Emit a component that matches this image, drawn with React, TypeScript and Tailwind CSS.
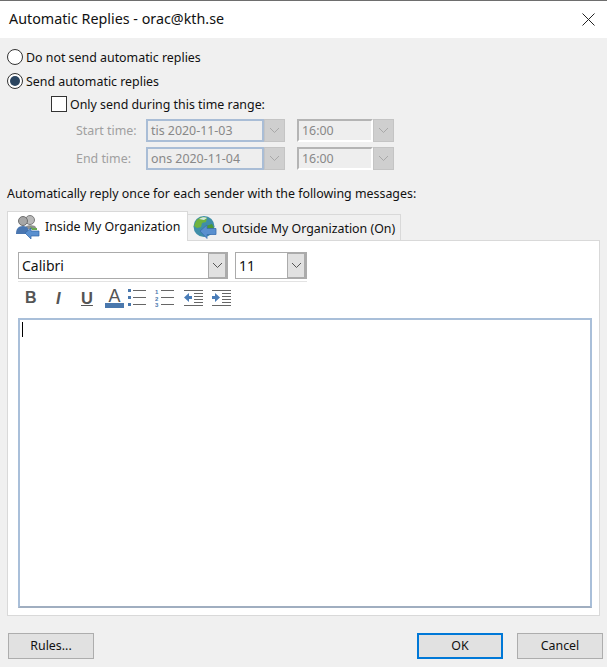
import type { ReactNode } from "react"

const Chevron = ({ color = "#555" }: { color?: string }) => (
  <svg width="11" height="7" viewBox="0 0 11 7" fill="none">
    <path d="M1 1l4.5 4.5L10 1" stroke={color} strokeWidth="1" />
  </svg>
)

function Radio({ checked, label }: { checked?: boolean; label: string }) {
  return (
    <div className="flex items-center h-6">
      <div className="w-[16px] h-[16px] rounded-full border border-[#333] bg-white flex items-center justify-center">
        {checked && <div className="w-[10px] h-[10px] rounded-full bg-[#2b4560]" />}
      </div>
      <span className="ml-[3px] pt-[2px] text-[#111]">{label}</span>
    </div>
  )
}

function DisabledCombo({ text, w, focus }: { text: string; w: string; focus?: boolean }) {
  return (
    <div className={`flex h-[23px] ${w}`}>
      <div
        className={`flex-1 flex items-center pl-[3px] pt-[2px] text-[#888] border-2 ${
          focus ? "border-[#a9bdd6]" : "border-[#b4b4b4] border-r-white border-b-white"
        } bg-[#eeeeee]`}
      >
        {text}
      </div>
      <div className="w-[21px] bg-[#cfcfcf] border border-[#c4c4c4] flex items-center justify-center">
        <Chevron color="#a8a8a8" />
      </div>
    </div>
  )
}

function Combo({ text, w }: { text: string; w: string }) {
  return (
    <div className={`flex h-[27px] ${w} border border-[#ababab] bg-white`}>
      <div className="flex-1 flex items-center pl-[3px] text-[14px] text-[#111]">{text}</div>
      <div className="w-[19px] bg-[#e1e1e1] border-l border-[#ababab] border-r-2 border-r-[#ababab] border-y border-y-[#ababab] flex items-center justify-center">
        <Chevron />
      </div>
    </div>
  )
}

function Btn({ children, primary }: { children: ReactNode; primary?: boolean }) {
  return (
    <button
      className={`w-[86px] h-[26px] bg-[#e1e1e1] text-[#111] ${
        primary ? "border-2 border-[#0078d7]" : "border border-[#adadad]"
      }`}
    >
      {children}
    </button>
  )
}

const PeopleIcon = () => (
  <svg width="26" height="25" viewBox="0 0 26 25">
    <circle cx="15" cy="6" r="4.5" fill="#b9b9b9" stroke="#7c7c7c" />
    <path d="M11 12c2-1 7-1 9 0l2 3h-10z" fill="#8f8f8f" />
    <circle cx="8" cy="7" r="4.5" fill="#a6a6a6" stroke="#6f6f6f" />
    <path d="M1 20c0-5 2-8 7-8s6 3 6 8z" fill="#4a76b0" />
    <path d="M15 12l3 2h4v2h-5z" fill="#6aa84f" />
    <path d="M10 19l6-5v3h8v5h-8v3z" fill="#5a90cf" stroke="#2f66a8" strokeWidth="0.7" />
  </svg>
)

const GlobeIcon = () => (
  <svg width="26" height="25" viewBox="0 0 26 25">
    <circle cx="12" cy="11.5" r="10.5" fill="#3f8ea8" />
    <path d="M4 6c3-4 8-5 11-3l-1 4-4 1-1 4-4 1-3-2z" fill="#6fb33f" />
    <path d="M14 11l6-2 2 4-4 6-4-3z" fill="#4e9a34" />
    <path d="M7 4c3-2 6-2 8-1l-3 2z" fill="#d5e8e0" />
    <path d="M8 16l7-6v3.5h9v6h-9v4z" fill="#5a90cf" stroke="#3a6fb0" strokeWidth="0.8" />
  </svg>
)

function BulletList() {
  return (
    <svg width="18" height="18" viewBox="0 0 18 18">
      <g fill="#4a78ad">
        <rect x="0" y="0" width="3" height="3" />
        <rect x="0" y="7" width="3" height="3" />
        <rect x="0" y="14" width="3" height="3" />
      </g>
      <g fill="#666">
        <rect x="5" y="1" width="13" height="1" />
        <rect x="5" y="8" width="13" height="1" />
        <rect x="5" y="15" width="13" height="1" />
      </g>
    </svg>
  )
}

function NumList() {
  return (
    <svg width="19" height="18" viewBox="0 0 19 18">
      <g fill="#4a78ad" fontSize="6" fontWeight="700" fontFamily="Liberation Sans">
        <text x="0" y="5">1</text>
        <text x="0" y="12">2</text>
        <text x="0" y="18">3</text>
      </g>
      <g fill="#666">
        <rect x="6" y="1" width="13" height="1" />
        <rect x="6" y="8" width="13" height="1" />
        <rect x="6" y="15" width="13" height="1" />
      </g>
    </svg>
  )
}

function Indent({ flip }: { flip?: boolean }) {
  return (
    <svg width="19" height="16" viewBox="0 0 19 16">
      <g fill="#666">
        <rect x="0" y="0" width="19" height="1" />
        <rect x="10" y="3" width="9" height="1" />
        <rect x="10" y="6" width="9" height="1" />
        <rect x="10" y="9" width="9" height="1" />
        <rect x="10" y="12" width="9" height="1" />
        <rect x="0" y="15" width="19" height="1" />
      </g>
      {flip ? (
        <path d="M0 6h3V3l5 4.5-5 4.5V9H0z" fill="#4a7db8" />
      ) : (
        <path d="M8 6H5V3L0 7.5 5 12V9h3z" fill="#4a7db8" />
      )}
    </svg>
  )
}

export default function App() {
  return (
    <div className="w-[607px] h-[667px] overflow-hidden bg-[#f0f0f0] text-[12.4px] font-['Noto_Sans','Open_Sans',sans-serif] leading-none">
      {/* title bar */}
      <div className="h-[38px] bg-white border-t border-[#6e6e6e] flex items-center justify-between pl-[9px] pr-[12px]">
        <span className="text-[14.3px] text-[#111]">Automatic Replies - orac@kth.se</span>
        <svg width="13" height="13" viewBox="0 0 13 13" stroke="#222" strokeWidth="1">
          <path d="M.5.5l12 12M12.5.5l-12 12" />
        </svg>
      </div>

      <div className="pt-[7px] pl-[7px]">
        <Radio label="Do not send automatic replies" />
        <Radio checked label="Send automatic replies" />
        <div className="flex items-center h-[22px] pl-[44px]">
          <div className="w-[16px] h-[16px] border border-[#333] bg-white" />
          <span className="ml-[3px] pt-[2px] text-[#111]">Only send during this time range:</span>
        </div>

        <div className="mt-[4px] flex flex-col gap-[5px] pl-[69px]">
          <div className="flex items-center">
            <span className="w-[70px] pt-[2px] text-[#a0a0a0]">Start time:</span>
            <DisabledCombo focus text="tis 2020-11-03" w="w-[139px]" />
            <div className="w-[12px]" />
            <DisabledCombo text="16:00" w="w-[97px]" />
          </div>
          <div className="flex items-center">
            <span className="w-[70px] pt-[2px] text-[#a0a0a0]">End time:</span>
            <DisabledCombo focus text="ons 2020-11-04" w="w-[139px]" />
            <div className="w-[12px]" />
            <DisabledCombo text="16:00" w="w-[97px]" />
          </div>
        </div>

        <div className="mt-[14px] h-[18px] pt-[2px] flex items-center text-[#111]">
          Automatically reply once for each sender with the following messages:
        </div>

        {/* tabs */}
        <div className="mt-[9px] flex items-end h-[30px] w-[593px]">
          <div className="w-[181px] h-[30px] bg-white border border-b-0 border-[#d9d9d9] flex items-center pl-[7px] gap-[4px] relative z-10 text-[#111]">
            <PeopleIcon />
            <span className="pt-[2px]">Inside My Organization</span>
          </div>
          <div className="w-[213px] h-[27px] bg-[#f0f0f0] border border-l-0 border-[#d9d9d9] flex items-center pl-[4px] gap-[4px] text-[#111]">
            <GlobeIcon />
            <span className="pt-[3px]">Outside My Organization (On)</span>
          </div>
        </div>

        {/* panel */}
        <div className="w-[593px] h-[376px] -mt-px bg-white border border-[#d9d9d9] pt-[11px] pl-[10px]">
          <div className="flex gap-[7px]">
            <Combo text="Calibri" w="w-[210px]" />
            <Combo text="11" w="w-[72px]" />
          </div>
          <div className="w-[289px] h-px bg-[#e3e3e3] mt-[2px]" />
          <div className="flex items-center h-[32px] pl-[7px] text-[#555]">
            <span className="w-[31px] text-[16px] font-bold font-['Liberation_Sans']">B</span>
            <span className="w-[25px] text-[16.5px] font-bold italic font-['Liberation_Sans']">I</span>
            <span className="w-[24px] text-[16.5px] font-bold underline font-['Liberation_Sans']">U</span>
            <div className="w-[19px] flex flex-col items-center">
              <span className="text-[18px] font-['Liberation_Sans'] leading-[14px]">A</span>
              <div className="w-[19px] h-[5px] bg-[#4a78ad]" />
            </div>
            <div className="ml-[4px]"><BulletList /></div>
            <div className="ml-[9px]"><NumList /></div>
            <div className="ml-[10px]"><Indent /></div>
            <div className="ml-[9px]"><Indent flip /></div>
          </div>
          <div className="w-[574px] h-[290px] mt-[4px] border-2 border-[#a9bfd9] border-b-[#a0aec0] bg-white pl-[2px] pt-[2px]">
            <div className="w-px h-[15px] bg-black" />
          </div>
        </div>
      </div>

      {/* footer */}
      <div className="mt-[17px] flex pl-[8px] pr-[4px]">
        <Btn>Rules...</Btn>
        <div className="flex-1" />
        <Btn primary>OK</Btn>
        <div className="w-[14px]" />
        <Btn>Cancel</Btn>
      </div>
    </div>
  )
}
